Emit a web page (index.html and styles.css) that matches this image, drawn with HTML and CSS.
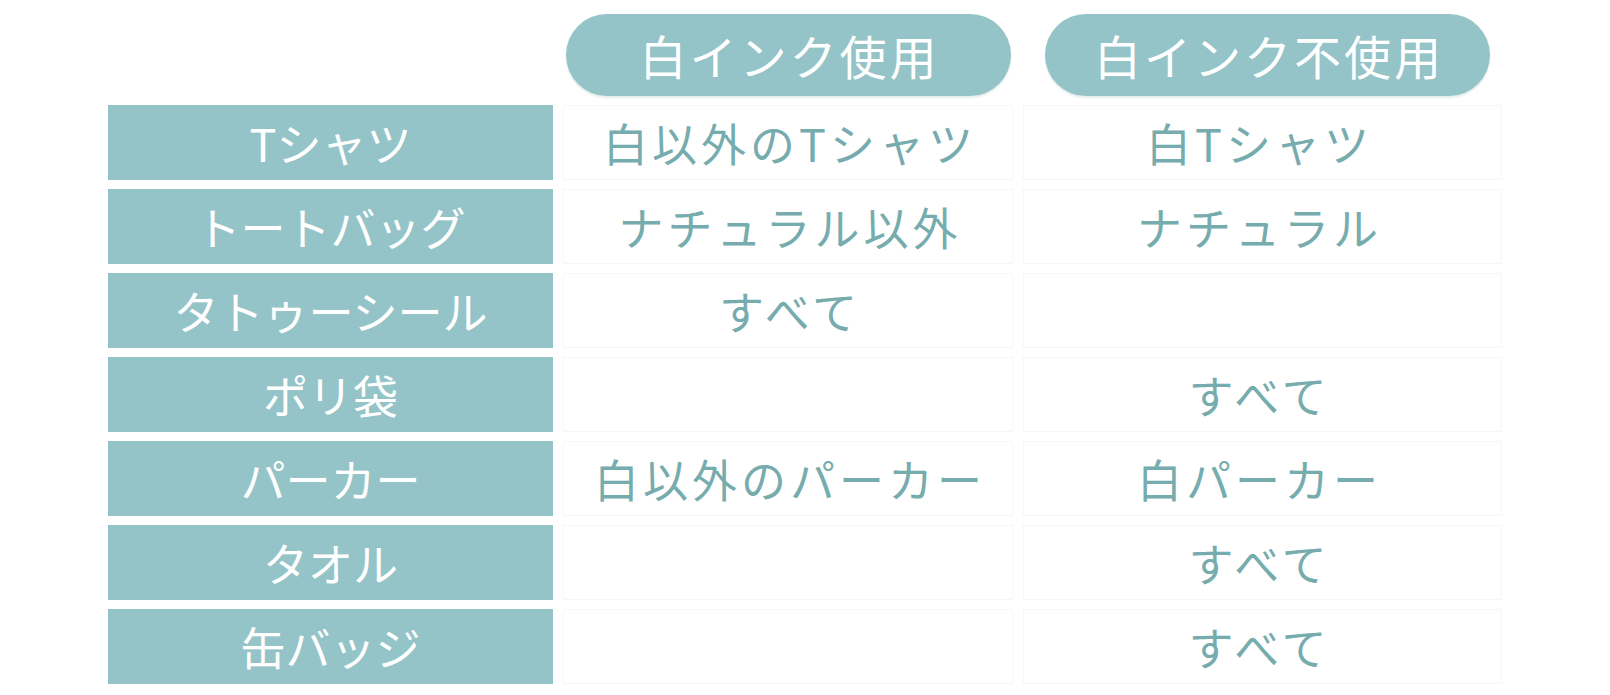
FILE: index.html
```html
<!DOCTYPE html>
<html lang="ja">
<head>
<meta charset="utf-8">
<title>白インク対応表</title>
<link rel="stylesheet" href="styles.css">
</head>
<body>
<div class="table">
  <div class="corner"></div>
  <div class="head"><span class="pill">白インク使用</span></div>
  <div class="head head2"><span class="pill">白インク不使用</span></div>

  <div class="label">Tシャツ</div>
  <div class="cell">白以外のTシャツ</div>
  <div class="cell c2">白Tシャツ</div>

  <div class="label">トートバッグ</div>
  <div class="cell">ナチュラル以外</div>
  <div class="cell c2">ナチュラル</div>

  <div class="label">タトゥーシール</div>
  <div class="cell">すべて</div>
  <div class="cell c2"></div>

  <div class="label">ポリ袋</div>
  <div class="cell"></div>
  <div class="cell c2">すべて</div>

  <div class="label">パーカー</div>
  <div class="cell">白以外のパーカー</div>
  <div class="cell c2">白パーカー</div>

  <div class="label">タオル</div>
  <div class="cell"></div>
  <div class="cell c2">すべて</div>

  <div class="label">缶バッジ</div>
  <div class="cell"></div>
  <div class="cell c2">すべて</div>
</div>
</body>
</html>
```
FILE: styles.css
```css
html, body {
  margin: 0;
  padding: 0;
  background: #ffffff;
}

body {
  font-family: "Noto Sans CJK JP", "Noto Sans", sans-serif;
}

.table {
  display: grid;
  grid-template-columns: 445px 450px 479px;
  grid-template-rows: 82px repeat(7, 75px);
  column-gap: 10px;
  row-gap: 9px;
  padding: 14px 0 0 108px;
}

.head {
  display: flex;
  align-items: center;
  justify-content: center;
  margin-bottom: 1px;
}

.head2 {
  justify-content: flex-start;
  padding-left: 22px;
}

.pill {
  display: flex;
  align-items: center;
  justify-content: center;
  width: 445px;
  height: 82px;
  border-radius: 41px;
  background: #94c4c7;
  color: #ffffff;
  font-size: 47px;
  line-height: 1;
  letter-spacing: 3px;
  text-indent: 3px;
  box-shadow: 0 2px 2px rgba(90, 140, 145, 0.16);
}

.label {
  display: flex;
  align-items: center;
  justify-content: center;
  background: #95c4c8;
  color: #ffffff;
  font-size: 45px;
  line-height: 1;
}

.cell {
  display: flex;
  align-items: center;
  justify-content: center;
  border: 1px solid #f6f6f4;
  color: #76acae;
  font-size: 45px;
  line-height: 1;
  letter-spacing: 4px;
  text-indent: 4px;
}

.c2 {
  padding-right: 10px;
}
```
